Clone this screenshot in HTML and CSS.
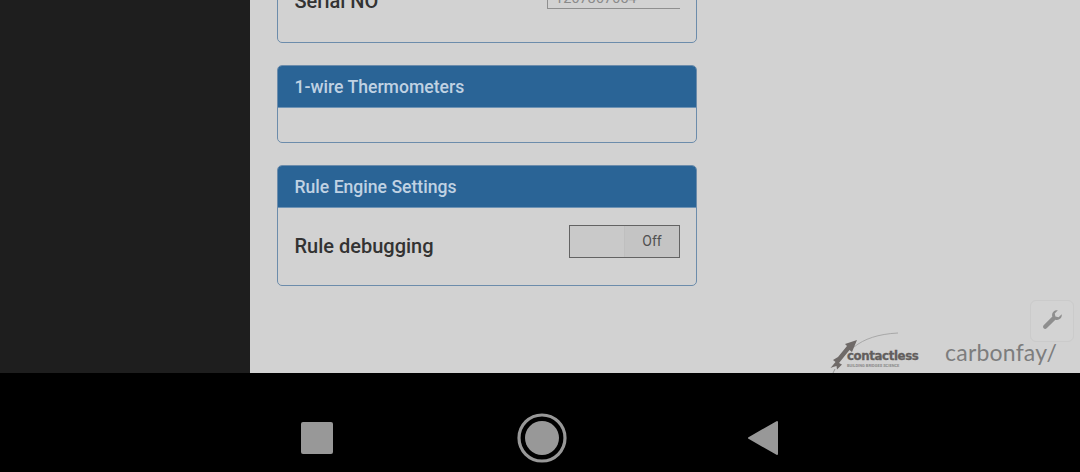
FILE: index.html
```
<!DOCTYPE html>
<html lang="en">
<head>
<meta charset="utf-8">
<title>Settings</title>
<link rel="stylesheet" href="styles.css">
</head>
<body>
<div class="screen">
  <div class="app">
    <aside class="sidebar"></aside>
    <main class="content">
      <section class="card">
        <div class="card-body serial-body">
          <span class="label">Serial NO</span>
          <span class="serial-input">1267867654</span>
        </div>
      </section>
      <section class="card">
        <h2 class="card-head">1-wire Thermometers</h2>
        <div class="card-body empty-body"></div>
      </section>
      <section class="card">
        <h2 class="card-head">Rule Engine Settings</h2>
        <div class="card-body rule-body">
          <span class="label">Rule debugging</span>
          <div class="toggle"><span class="toggle-off"></span><span class="toggle-text">Off</span></div>
        </div>
      </section>
      <button class="tool-btn" aria-label="Tools">
        <svg viewBox="0 0 24 24" width="22" height="22"><path fill="#8e8e8e" d="M22.6 5.600c.3 1.700-.2 3.500-1.500 4.800-1.500 1.500-3.600 1.900-5.400 1.200L6.200 21.100c-.9.900-2.400.9-3.300 0s-.9-2.400 0-3.300l9.500-9.500c-.7-1.800-.3-3.900 1.200-5.400C14.900 1.600 16.700 1.100 18.400 1.400L15 4.800l.7 3.500 3.500.7z"/></svg>
      </button>
      <div class="logos">
        <div class="logo-contactless">
          <svg class="rocket" viewBox="0 0 72 46" width="72" height="46">
            <path d="M24 17C34 9 48 4 68 3" fill="none" stroke="#a8a8a8" stroke-width="1"/>
            <path fill="#6f6a68" d="M27 10l-5 12-2.500-2L9 33l3 1.500-5 5-.5-3.500L3 37l-2.500 1 5-6L3 30l5-3 9-11-2-2z"/>
            <path d="M5 39L2 45" stroke="#9a9a9a" stroke-width="1"/>
          </svg>
          <div class="contactless-words">
            <span class="contactless-name">contactless</span>
            <span class="contactless-sub">BUILDING BRIDGES SCIENCE</span>
          </div>
        </div>
        <span class="logo-carbon">carbonfay<i class="slash">/</i></span>
      </div>
    </main>
  </div>
  <nav class="nav">
    <svg viewBox="0 0 32 32" width="32" height="32"><rect width="32" height="32" rx="2" fill="#989898"/></svg>
    <svg viewBox="0 0 50 50" width="50" height="50"><circle cx="25" cy="25" r="23" fill="none" stroke="#989898" stroke-width="3.200"/><circle cx="25" cy="25" r="17" fill="#989898"/></svg>
    <svg class="nav-back" viewBox="0 0 32 36" width="32" height="36"><path fill="#989898" stroke="#989898" stroke-width="2" stroke-linejoin="round" d="M30 2v32L2 18z"/></svg>
  </nav>
</div>
</body>
</html>
```
FILE: styles.css
```
* { box-sizing: border-box; }
html, body { margin: 0; padding: 0; }
body { font-family: Roboto, "Liberation Sans", sans-serif; background: #000; }
.screen { width: 1080px; height: 472px; display: flex; flex-direction: column; overflow: hidden; }
.app { height: 373px; display: flex; }
.sidebar { width: 250px; background: #1e1e1e; }
.content {
  position: relative;
  flex: 1;
  background: #d2d2d2;
  overflow: hidden;
  display: flex;
  flex-direction: column;
  justify-content: flex-end;
  align-items: flex-start;
  gap: 22px;
  padding: 0 0 87px 27px;
}
.card {
  width: 420px;
  flex: none;
  border: 1px solid #6c8cab;
  border-radius: 5px;
  overflow: hidden;
}
.card-head {
  margin: 0;
  height: 42px;
  padding: 0 16.500px;
  display: flex;
  align-items: center;
  background: #2a6496;
  border-bottom: 1px solid #6e93b5;
  color: #c0d2e3;
  font-size: 17.600px;
  font-weight: 500;
}
.card-body { display: flex; justify-content: space-between; padding: 0 16px 0 16.500px; }
.label { color: #333; font-size: 20px; font-weight: 500; }
.serial-body { height: 60px; padding-top: 7px; }
.serial-input {
  width: 133px;
  height: 20px;
  border-left: 1px solid #8f8f8f;
  border-bottom: 1px solid #8f8f8f;
  color: #8a8a8a;
  font-size: 14.500px;
  padding: 3px 0 0 7px;
  line-height: 14px;
}
.empty-body { height: 34px; }
.rule-body { height: 77px; padding-top: 17px; }
.rule-body .label { line-height: 42px; }
.toggle {
  width: 111px;
  height: 33px;
  display: flex;
  border: 1px solid #636363;
  background: #c6c6c6;
}
.toggle-off { width: 55px; background: #c9c9c9; border-right: 1px solid #bfbfbf; }
.toggle-text { flex: 1; text-align: center; font-size: 14px; line-height: 30px; color: #505050; background: #c4c4c4; }
.tool-btn {
  position: absolute;
  right: 6px;
  top: 300px;
  width: 44px;
  height: 42px;
  padding: 0 0 3px;
  display: flex;
  align-items: center;
  justify-content: center;
  background: #d3d3d3;
  border: 1px solid #cbcbcb;
  border-radius: 6px;
}
.logos {
  position: absolute;
  left: 580px;
  top: 328px;
  width: 227px;
  height: 45px;
  display: flex;
  justify-content: space-between;
}
.logo-contactless { position: relative; width: 92px; height: 45px; }
.rocket { position: absolute; left: 0; top: 2px; }
.contactless-words { position: absolute; left: 17px; top: 22px; display: flex; flex-direction: column; }
.contactless-name { font-family: "DejaVu Sans", sans-serif; font-size: 11.800px; line-height: 13px; font-weight: 700; color: #625e5d; letter-spacing: -0.400px; -webkit-text-stroke: .3px #625e5d; }
.contactless-sub { font-size: 4px; line-height: 5px; font-weight: 700; color: #8b8b8b; white-space: nowrap; }
.logo-carbon { font-family: Lato, sans-serif; font-size: 23px; line-height: 28px; margin-top: 10px; color: #7d7d7d; letter-spacing: .2px; white-space: nowrap; }
.slash { font-style: normal; }
.nav {
  flex: 1;
  background: #000;
  display: flex;
  align-items: center;
  gap: 184px;
  padding: 30px 0 0 301px;
}
.nav-back { margin-left: -4px; }
```
